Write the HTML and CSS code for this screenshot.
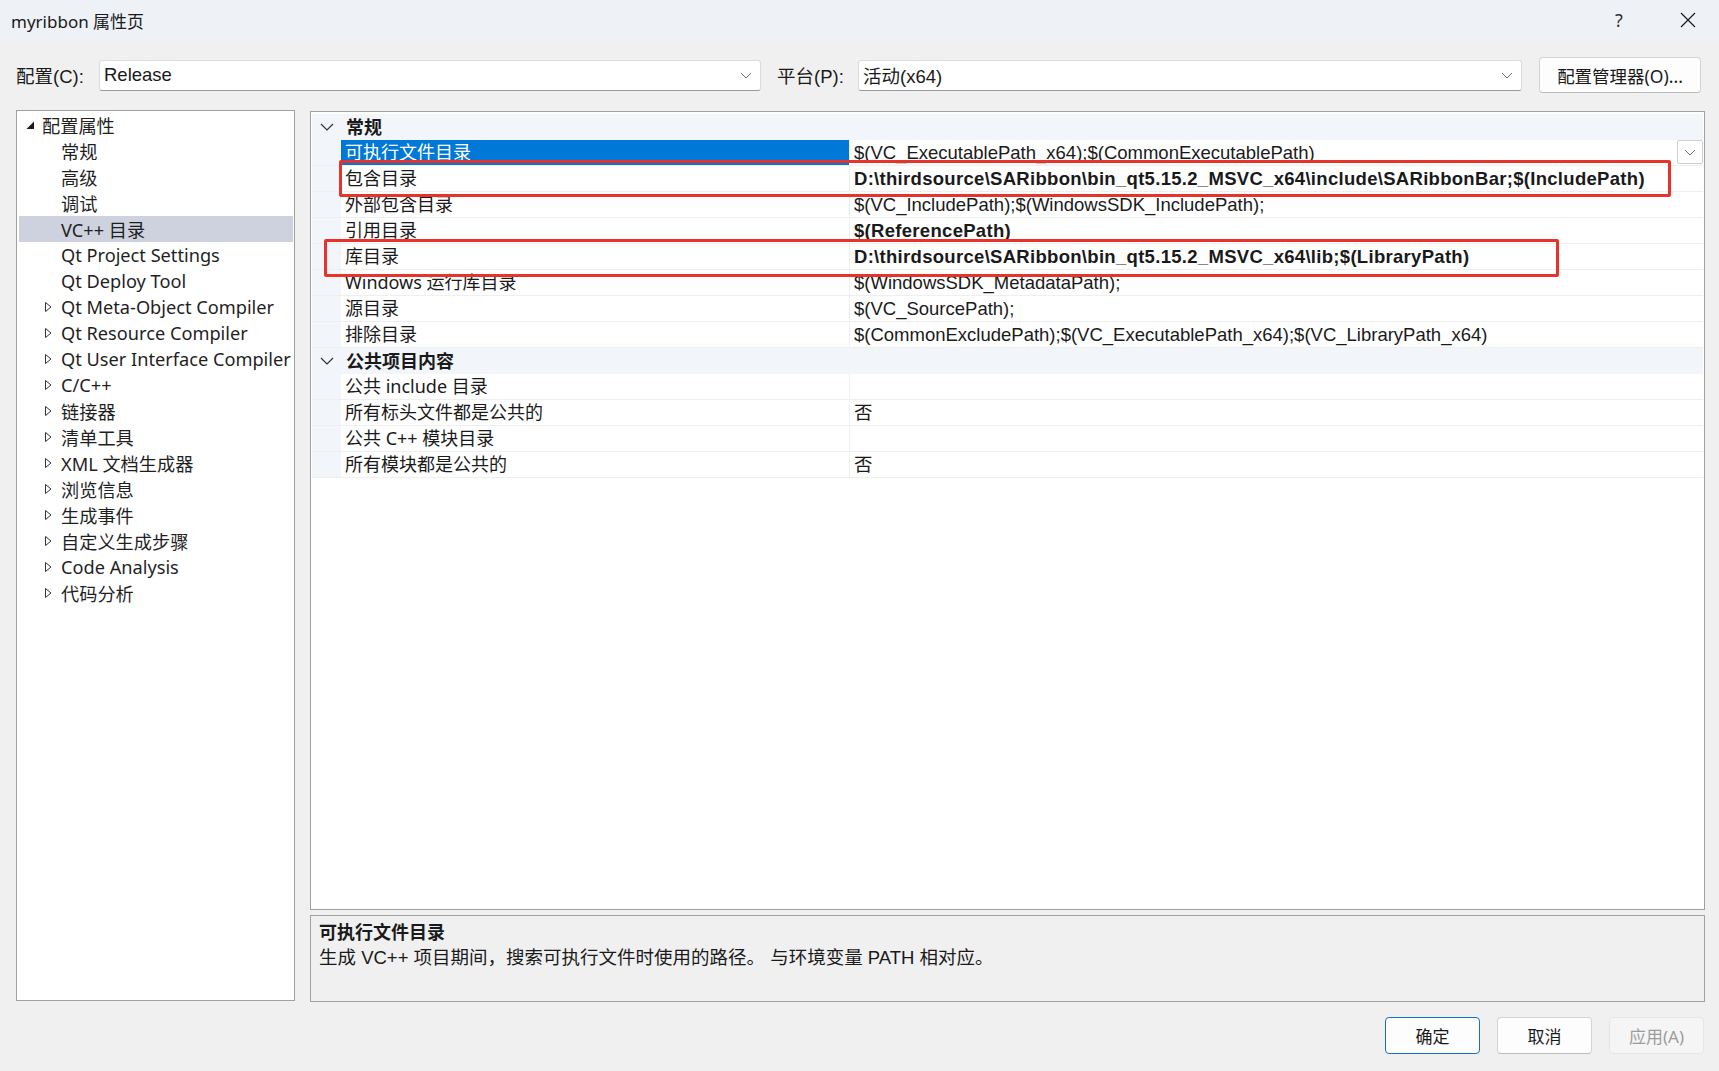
FILE: index.html
```html
<!DOCTYPE html>
<html lang="zh-CN">
<head>
    <meta charset="UTF-8">
    <title>myribbon 属性页</title>
    <link rel="stylesheet" href="styles.css">
</head>
<body>
    <div class="titlebar">
        <span class="title">myribbon 属性页</span>
        <div class="caption">
            <span class="help">?</span>
            <svg class="close" width="16" height="16" viewBox="0 0 16 16"><path d="M1 1 L15 15 M15 1 L1 15" stroke="#1a1a1a" stroke-width="1.2" fill="none"/></svg>
        </div>
    </div>

    <div class="configbar">
        <label class="lbl lbl-config">配置(C):</label>
        <div class="combo combo-config">
            <span>Release</span>
            <svg width="12" height="7" viewBox="0 0 12 7"><path d="M1 1 L6 6 L11 1" stroke="#707070" stroke-width="1" fill="none"/></svg>
        </div>
        <label class="lbl lbl-platform">平台(P):</label>
        <div class="combo combo-platform">
            <span>活动(x64)</span>
            <svg width="12" height="7" viewBox="0 0 12 7"><path d="M1 1 L6 6 L11 1" stroke="#707070" stroke-width="1" fill="none"/></svg>
        </div>
        <button class="btn btn-mgr">配置管理器(O)...</button>
    </div>

    <div class="main">
        <div class="tree">
            <div class="node root"><svg class="exp" width="12" height="12" viewBox="0 0 12 12"><path d="M10 2.5 L10 10 L2.5 10 Z" fill="#1a1a1a"/></svg>配置属性</div>
            <div class="node child"><span class="exp"></span>常规</div>
            <div class="node child"><span class="exp"></span>高级</div>
            <div class="node child"><span class="exp"></span>调试</div>
            <div class="node child selected"><span class="exp"></span>VC++ 目录</div>
            <div class="node child"><span class="exp"></span>Qt Project Settings</div>
            <div class="node child"><span class="exp"></span>Qt Deploy Tool</div>
            <div class="node child"><svg class="exp" width="12" height="12" viewBox="0 0 12 12"><path d="M3.5 1.5 L9 6 L3.5 10.5 Z" stroke="#333" stroke-width="1" fill="none"/></svg>Qt Meta-Object Compiler</div>
            <div class="node child"><svg class="exp" width="12" height="12" viewBox="0 0 12 12"><path d="M3.5 1.5 L9 6 L3.5 10.5 Z" stroke="#333" stroke-width="1" fill="none"/></svg>Qt Resource Compiler</div>
            <div class="node child"><svg class="exp" width="12" height="12" viewBox="0 0 12 12"><path d="M3.5 1.5 L9 6 L3.5 10.5 Z" stroke="#333" stroke-width="1" fill="none"/></svg>Qt User Interface Compiler</div>
            <div class="node child"><svg class="exp" width="12" height="12" viewBox="0 0 12 12"><path d="M3.5 1.5 L9 6 L3.5 10.5 Z" stroke="#333" stroke-width="1" fill="none"/></svg>C/C++</div>
            <div class="node child"><svg class="exp" width="12" height="12" viewBox="0 0 12 12"><path d="M3.5 1.5 L9 6 L3.5 10.5 Z" stroke="#333" stroke-width="1" fill="none"/></svg>链接器</div>
            <div class="node child"><svg class="exp" width="12" height="12" viewBox="0 0 12 12"><path d="M3.5 1.5 L9 6 L3.5 10.5 Z" stroke="#333" stroke-width="1" fill="none"/></svg>清单工具</div>
            <div class="node child"><svg class="exp" width="12" height="12" viewBox="0 0 12 12"><path d="M3.5 1.5 L9 6 L3.5 10.5 Z" stroke="#333" stroke-width="1" fill="none"/></svg>XML 文档生成器</div>
            <div class="node child"><svg class="exp" width="12" height="12" viewBox="0 0 12 12"><path d="M3.5 1.5 L9 6 L3.5 10.5 Z" stroke="#333" stroke-width="1" fill="none"/></svg>浏览信息</div>
            <div class="node child"><svg class="exp" width="12" height="12" viewBox="0 0 12 12"><path d="M3.5 1.5 L9 6 L3.5 10.5 Z" stroke="#333" stroke-width="1" fill="none"/></svg>生成事件</div>
            <div class="node child"><svg class="exp" width="12" height="12" viewBox="0 0 12 12"><path d="M3.5 1.5 L9 6 L3.5 10.5 Z" stroke="#333" stroke-width="1" fill="none"/></svg>自定义生成步骤</div>
            <div class="node child"><svg class="exp" width="12" height="12" viewBox="0 0 12 12"><path d="M3.5 1.5 L9 6 L3.5 10.5 Z" stroke="#333" stroke-width="1" fill="none"/></svg>Code Analysis</div>
            <div class="node child"><svg class="exp" width="12" height="12" viewBox="0 0 12 12"><path d="M3.5 1.5 L9 6 L3.5 10.5 Z" stroke="#333" stroke-width="1" fill="none"/></svg>代码分析</div>
        </div>

        <div class="right">
            <div class="grid">
                <div class="cat">
                    <div class="gutter"><svg width="14" height="8" viewBox="0 0 14 8"><path d="M1 1 L7 7 L13 1" stroke="#333" stroke-width="1.2" fill="none"/></svg></div>
                    <div class="cat-name">常规</div>
                </div>
                <div class="prop active">
                    <div class="gutter"></div>
                    <div class="name">可执行文件目录</div>
                    <div class="value">$(VC_ExecutablePath_x64);$(CommonExecutablePath)
                        <span class="drop"><svg width="12" height="7" viewBox="0 0 12 7"><path d="M1 1 L6 6 L11 1" stroke="#707070" stroke-width="1" fill="none"/></svg></span>
                    </div>
                </div>
                <div class="prop">
                    <div class="gutter"></div>
                    <div class="name">包含目录</div>
                    <div class="value bold">D:\thirdsource\SARibbon\bin_qt5.15.2_MSVC_x64\include\SARibbonBar;$(IncludePath)</div>
                </div>
                <div class="prop">
                    <div class="gutter"></div>
                    <div class="name">外部包含目录</div>
                    <div class="value">$(VC_IncludePath);$(WindowsSDK_IncludePath);</div>
                </div>
                <div class="prop">
                    <div class="gutter"></div>
                    <div class="name">引用目录</div>
                    <div class="value bold">$(ReferencePath)</div>
                </div>
                <div class="prop">
                    <div class="gutter"></div>
                    <div class="name">库目录</div>
                    <div class="value bold">D:\thirdsource\SARibbon\bin_qt5.15.2_MSVC_x64\lib;$(LibraryPath)</div>
                </div>
                <div class="prop">
                    <div class="gutter"></div>
                    <div class="name">Windows 运行库目录</div>
                    <div class="value">$(WindowsSDK_MetadataPath);</div>
                </div>
                <div class="prop">
                    <div class="gutter"></div>
                    <div class="name">源目录</div>
                    <div class="value">$(VC_SourcePath);</div>
                </div>
                <div class="prop">
                    <div class="gutter"></div>
                    <div class="name">排除目录</div>
                    <div class="value">$(CommonExcludePath);$(VC_ExecutablePath_x64);$(VC_LibraryPath_x64)</div>
                </div>
                <div class="cat">
                    <div class="gutter"><svg width="14" height="8" viewBox="0 0 14 8"><path d="M1 1 L7 7 L13 1" stroke="#333" stroke-width="1.2" fill="none"/></svg></div>
                    <div class="cat-name">公共项目内容</div>
                </div>
                <div class="prop">
                    <div class="gutter"></div>
                    <div class="name">公共 include 目录</div>
                    <div class="value"></div>
                </div>
                <div class="prop">
                    <div class="gutter"></div>
                    <div class="name">所有标头文件都是公共的</div>
                    <div class="value">否</div>
                </div>
                <div class="prop">
                    <div class="gutter"></div>
                    <div class="name">公共 C++ 模块目录</div>
                    <div class="value"></div>
                </div>
                <div class="prop">
                    <div class="gutter"></div>
                    <div class="name">所有模块都是公共的</div>
                    <div class="value">否</div>
                </div>

                <div class="mark mark-include"></div>
                <div class="mark mark-lib"></div>
            </div>
            <div class="desc">
                <div class="desc-title">可执行文件目录</div>
                <div class="desc-text">生成 VC++ 项目期间，搜索可执行文件时使用的路径。 与环境变量 PATH 相对应。</div>
            </div>
        </div>
    </div>

    <div class="footer">
        <button class="btn btn-ok">确定</button>
        <button class="btn">取消</button>
        <button class="btn btn-disabled">应用(A)</button>
    </div>
</body>
</html>
```

FILE: styles.css
```css
/* Property page dialog, Windows 11 look */
body {
    margin: 0;
    padding: 0;
    width: 1719px;
    height: 1071px;
    overflow: hidden;
    background-color: #f0f0f0;
    color: #1a1a1a;
    font-family: "Noto Sans", "Noto Sans CJK SC", sans-serif;
    font-size: 18px;
}
.titlebar {
    height: 40px;
    background-color: #eef2f7;
    display: flex;
    align-items: center;
    justify-content: space-between;
    padding-left: 11px;
}
.title {
    font-size: 17px;
    color: #1a1a1a;
}
.caption {
    display: flex;
    align-items: center;
}
.help {
    font-size: 18px;
    color: #333;
    width: 20px;
    text-align: center;
    margin-right: 51px;
}
.close {
    margin-right: 23px;
}
.configbar {
    height: 70px;
    display: flex;
    align-items: center;
    padding-left: 16px;
}
.lbl, .combo, .value, .desc-text {
    font-family: "Liberation Sans", "Noto Sans CJK SC", sans-serif;
    font-size: 18.5px;
}
.lbl-config {
    width: 83px;
}
.lbl-platform {
    width: 81px;
    margin-left: 16px;
}
.combo {
    height: 31px;
    box-sizing: border-box;
    background-color: #ffffff;
    border: 1px solid #dcdcdc;
    border-bottom-color: #9a9a9a;
    border-radius: 3px;
    display: flex;
    align-items: center;
    justify-content: space-between;
    padding: 0 8px 0 4px;
}
.combo-config {
    width: 662px;
}
.combo-platform {
    width: 664px;
}
.btn {
    font-family: "Noto Sans", "Noto Sans CJK SC", sans-serif;
    font-size: 17px;
    color: #1a1a1a;
    background-color: #fdfdfd;
    border: 1px solid #d4d4d4;
    border-bottom-color: #bcbcbc;
    border-radius: 4px;
    padding: 0;
    height: 37px;
    width: 95px;
}
.btn-mgr {
    margin-left: 17px;
    width: 162px;
    height: 36px;
    font-size: 17.5px;
}
.main {
    display: flex;
    padding: 0 14px 0 16px;
    gap: 15px;
    height: 892px;
}
.tree {
    width: 279px;
    height: 891px;
    box-sizing: border-box;
    background-color: #ffffff;
    border: 1px solid #a0a0a0;
    padding: 1px 1px 0 2px;
}
.node {
    height: 26px;
    display: flex;
    align-items: center;
    white-space: nowrap;
    color: #1f1f1f;
    font-size: 18.2px;
}
.node .exp {
    width: 12px;
    height: 12px;
    flex: none;
}
.root {
    padding-left: 5px;
}
.root .exp {
    margin-right: 6px;
}
.child {
    padding-left: 23px;
}
.child .exp {
    margin-right: 7px;
}
.selected {
    background-color: #cdd2de;
}
.right {
    width: 1395px;
    margin-top: 1px;
    display: flex;
    flex-direction: column;
    gap: 5px;
}
.grid {
    position: relative;
    height: 799px;
    box-sizing: border-box;
    background-color: #ffffff;
    border: 1px solid #a0a0a0;
    padding: 2px 1px 0 1px;
}
.cat, .prop {
    display: flex;
    height: 26px;
    box-sizing: border-box;
}
.cat {
    background-color: #f2f5fa;
}
.gutter {
    width: 29px;
    flex: none;
    background-color: #f2f5fa;
    display: flex;
    align-items: center;
    justify-content: center;
}
.cat-name {
    font-weight: bold;
    padding-left: 5px;
    line-height: 26px;
}
.prop {
    border-bottom: 1px solid #efefef;
}
.name {
    width: 509px;
    flex: none;
    box-sizing: border-box;
    padding-left: 4px;
    line-height: 25px;
    border-right: 1px solid #efefef;
    white-space: nowrap;
}
.value {
    flex: 1;
    padding-left: 4px;
    line-height: 25px;
    white-space: nowrap;
    position: relative;
}
.bold {
    font-weight: bold;
    letter-spacing: 0.3px;
}
.active .name {
    background-color: #0078d7;
    color: #ffffff;
}
.drop {
    position: absolute;
    right: 0;
    top: 0;
    width: 26px;
    height: 24px;
    box-sizing: border-box;
    border: 1px solid #d0d0d0;
    border-radius: 2px;
    background-color: #ffffff;
    display: flex;
    align-items: center;
    justify-content: center;
}
.mark {
    position: absolute;
    border: 3px solid #e8332b;
    border-radius: 2px;
    box-sizing: border-box;
}
.mark-include {
    left: 28px;
    top: 48px;
    width: 1332px;
    height: 37px;
}
.mark-lib {
    left: 13px;
    top: 127px;
    width: 1235px;
    height: 38px;
}
.desc {
    height: 87px;
    box-sizing: border-box;
    border: 1px solid #a0a0a0;
    background-color: #f0f0f0;
    padding: 4px 8px;
}
.desc-title {
    font-weight: bold;
    line-height: 25px;
}
.desc-text {
    line-height: 25px;
}
.footer {
    display: flex;
    justify-content: flex-end;
    gap: 17px;
    padding: 15px 15px 0 0;
}
.btn-ok {
    border: 1px solid #1a6fb8;
}
.btn-disabled {
    background-color: #f5f5f5;
    border-color: #e6e6e6;
    color: #9c9c9c;
}
```
